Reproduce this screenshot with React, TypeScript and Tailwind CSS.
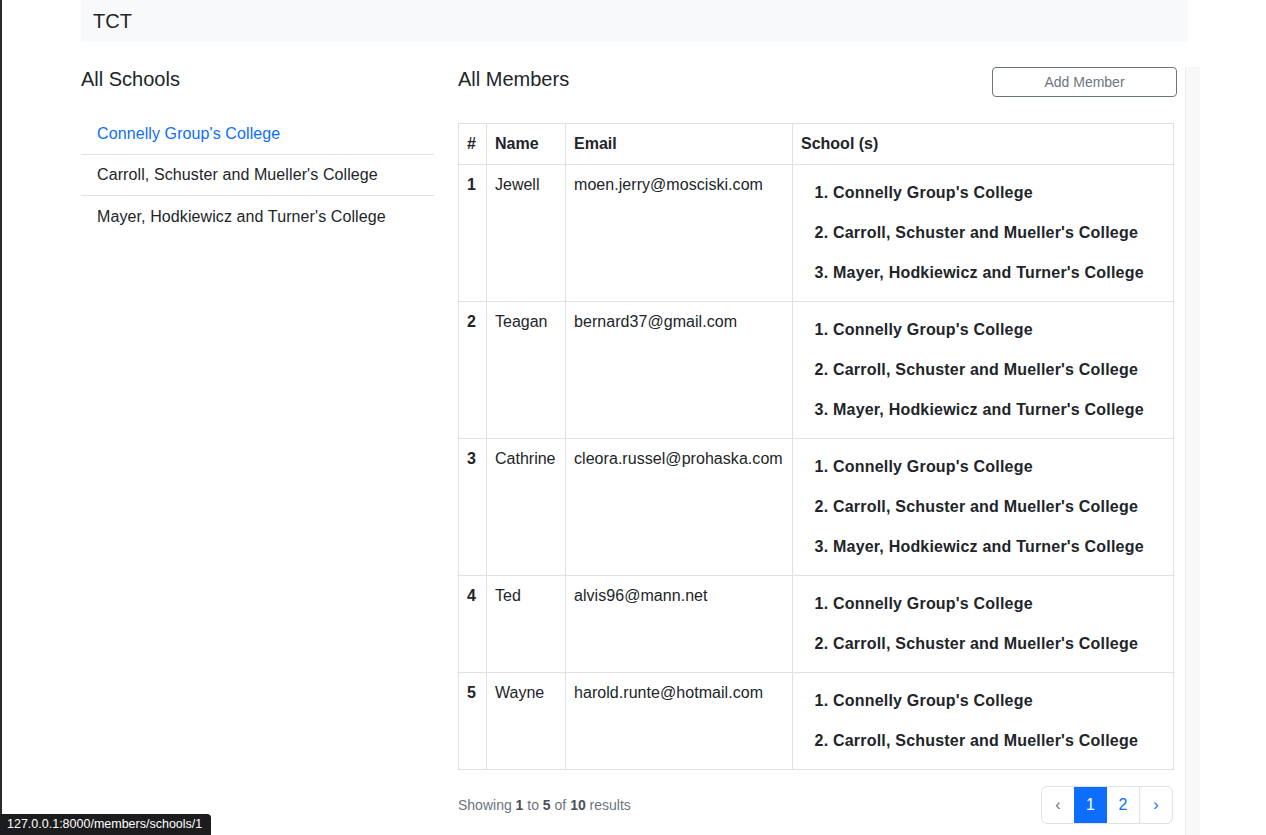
const schools = [
  "Connelly Group's College",
  "Carroll, Schuster and Mueller's College",
  "Mayer, Hodkiewicz and Turner's College",
];

const members = [
  { id: 1, name: 'Jewell', email: 'moen.jerry@mosciski.com', schools: 3 },
  { id: 2, name: 'Teagan', email: 'bernard37@gmail.com', schools: 3 },
  { id: 3, name: 'Cathrine', email: 'cleora.russel@prohaska.com', schools: 3 },
  { id: 4, name: 'Ted', email: 'alvis96@mann.net', schools: 2 },
  { id: 5, name: 'Wayne', email: 'harold.runte@hotmail.com', schools: 2 },
];

export default function App() {
  return (
    <div
      className="relative min-h-[835px] bg-white text-[#212529] flex"
      style={{ fontFamily: '"Liberation Sans", Arial, sans-serif' }}
    >
      {/* window edge */}
      <div className="w-[2px] shrink-0 bg-[#2a2a2a]" />

      <div className="ml-[79px] w-[1107px]">
        {/* Navbar */}
        <nav className="h-[42px] bg-[#f8f9fa] px-3 flex items-center">
          <span className="text-[20px] leading-6">TCT</span>
        </nav>

        <div className="flex mt-[25px]">
          {/* All Schools */}
          <div className="w-[353px] shrink-0">
            <h4 className="text-[20px] leading-6 font-medium">All Schools</h4>
            <ul className="mt-[23px]">
              {schools.map((s, i) => (
                <li
                  key={s}
                  className={`h-[41px] px-4 flex items-center text-[16px] tracking-[0.1px] ${
                    i === 0 ? 'text-[#0d6efd]' : 'text-[#212529]'
                  } ${i < schools.length - 1 ? 'border-b border-[#dee2e6]' : ''}`}
                >
                  {s}
                </li>
              ))}
            </ul>
          </div>

          {/* All Members */}
          <div className="w-[715px] ml-6">
            <div className="flex justify-between items-start -mr-1">
              <h4 className="text-[20px] leading-6 font-medium">All Members</h4>
              <button className="w-[185px] h-[30px] border border-[#6c757d] rounded text-[14px] text-[#6c757d]">
                Add Member
              </button>
            </div>

            <table className="mt-[26px] w-[715px] table-fixed border-collapse border border-[#dee2e6] text-[16px] leading-6">
              <colgroup>
                <col className="w-[28px]" />
                <col className="w-[79px]" />
                <col className="w-[227px]" />
                <col className="w-[381px]" />
              </colgroup>
              <thead>
                <tr>
                  <th className="border border-[#dee2e6] px-2 py-2 text-left font-bold">#</th>
                  <th className="border border-[#dee2e6] px-2 py-2 text-left font-bold">Name</th>
                  <th className="border border-[#dee2e6] px-2 py-2 text-left font-bold">Email</th>
                  <th className="border border-[#dee2e6] px-2 py-2 text-left font-bold">School (s)</th>
                </tr>
              </thead>
              <tbody>
                {members.map((m) => (
                  <tr key={m.id}>
                    <td className="border border-[#dee2e6] px-2 py-2 align-top font-bold">{m.id}</td>
                    <td className="border border-[#dee2e6] px-2 py-2 align-top">{m.name}</td>
                    <td className="border border-[#dee2e6] px-2 py-2 align-top tracking-[0.05px]">{m.email}</td>
                    <td className="border border-[#dee2e6] px-2 py-2 align-top">
                      <ol className="list-decimal pl-8 my-2 flex flex-col gap-4 font-bold tracking-[0.2px]">
                        {schools.slice(0, m.schools).map((s) => (
                          <li key={s}>{s}</li>
                        ))}
                      </ol>
                    </td>
                  </tr>
                ))}
              </tbody>
            </table>

            {/* Footer */}
            <div className="mt-4 flex items-center justify-between">
              <p className="text-[14px] text-[#6c757d]">
                Showing <span className="font-bold text-[#495057]">1</span> to{' '}
                <span className="font-bold text-[#495057]">5</span> of{' '}
                <span className="font-bold text-[#495057]">10</span> results
              </p>
              <div className="flex h-[38px] border border-[#dee2e6] rounded-md overflow-hidden text-[16px]">
                <span className="w-[32px] flex items-center justify-center text-[#6c757d]">‹</span>
                <span className="w-[33px] flex items-center justify-center bg-[#0d6efd] text-white">1</span>
                <span className="w-[33px] flex items-center justify-center text-[#0d6efd] border-r border-[#dee2e6]">2</span>
                <span className="w-[32px] flex items-center justify-center text-[#0d6efd]">›</span>
              </div>
            </div>
          </div>
        </div>
      </div>

      {/* scroll track on the right */}
      <div className="absolute left-[1185px] top-[67px] bottom-0 w-[15px] bg-[#f8f8f8] border-l border-[#ececec]" />

      {/* status bar link preview */}
      <div className="absolute left-0 bottom-0 h-[21px] w-[211px] bg-[#1c1c1e] rounded-tr-[4px] flex items-center pl-[7px] text-[12.5px] text-white">
        127.0.0.1:8000/members/schools/1
      </div>
    </div>
  );
}
